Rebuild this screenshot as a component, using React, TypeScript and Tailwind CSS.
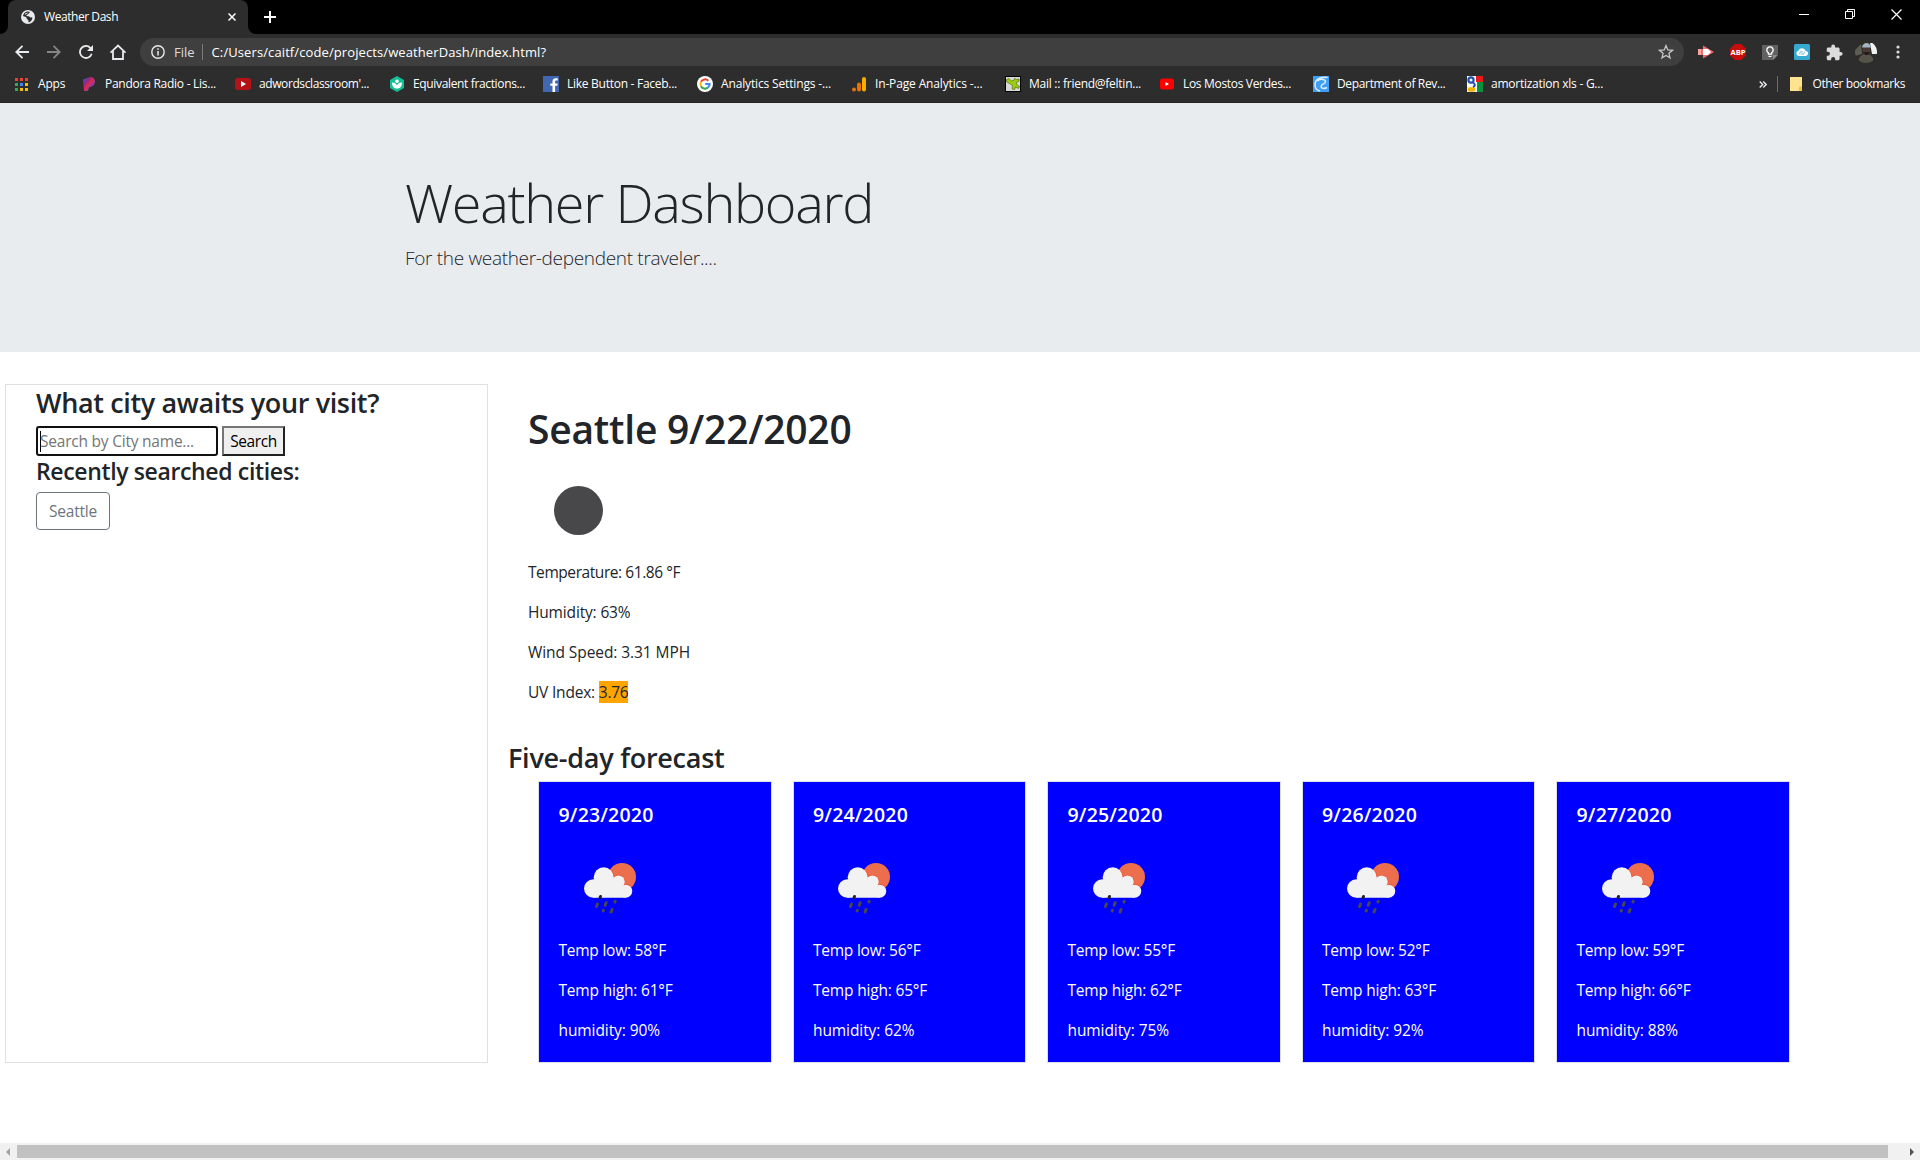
function GlobeIcon() {
  return (
    <svg width="14" height="14" viewBox="0 0 14 14">
      <circle cx="7" cy="7" r="7" fill="#e8eaed" />
      <path d="M6.500 1.500C9 1.300 9.300 2.600 8 3.300c-1 .5-.8 1.200-1.900 1.500-.9.200-.9.900-.2 1.200.8.300 2.300-.1 3 .9.500.7 1.500.6 2.300.4.500 1.200-.4 3.700-2.600 4.800-.9.500-1.400.2-1.200-.6.300-.9-.1-1.500-.9-1.900-.9-.5-.8-1.300-.9-1.800C5.300 6.900 3.500 7 2 6.100c.2-2.200 2-4.200 4.500-4.600z" fill="#2d2d2d" />
      <path d="M4.200 3.200c1.200.3 1.300-.8 2.500-.8.600.4-.2 1-1 1.300-.6.300-.9 1.100-1.900.9z" fill="#e8eaed" />
    </svg>
  );
}

function ExtIcons() {
  return (
    <div className="ml-[6px] flex items-center">
      <span className="flex w-8 justify-center">
        <svg width="16" height="16" viewBox="0 0 16 16">
          <path d="M0 5h5V1.500L16 8 5 14.500V11H0z" fill="#f46a6c" />
          <path d="M0 5h3v6H0z" fill="#f9a3a0" />
          <path d="M5 5h5l3 3-3 3H5z" fill="#fff" />
        </svg>
      </span>
      <span className="flex w-8 justify-center">
        <svg width="16" height="16" viewBox="0 0 16 16">
          <path d="M4.700 0h6.600L16 4.700v6.600L11.300 16H4.700L0 11.300V4.700z" fill="#c70d0c" />
          <text x="8" y="10.800" textAnchor="middle" fontFamily="Open Sans" fontWeight="700" fontSize="7.600" fill="#fff">ABP</text>
        </svg>
      </span>
      <span className="flex w-8 justify-center">
        <svg width="16" height="16" viewBox="0 0 16 16">
          <path d="M0 1h16v9l-5 6H0z" fill="#616161" />
          <path d="M11 16v-5h5z" fill="#8a8a8a" />
          <path d="M6.400 10.200V8.800a3.200 3.200 0 1 1 3.200 0v1.400z" fill="none" stroke="#fff" strokeWidth="1.300" />
          <path d="M6.500 12.400h3" stroke="#fff" strokeWidth="1.200" />
        </svg>
      </span>
      <span className="flex w-8 justify-center">
        <svg width="16" height="16" viewBox="0 0 16 16">
          <rect width="16" height="16" rx="1.500" fill="#35a9cf" />
          <path d="M4.800 12a2.700 2.700 0 0 1-.4-5.300 3.900 3.900 0 0 1 7.300.3 2.500 2.500 0 0 1-.2 5z" fill="#fff" />
          <path d="M6 10.300a1.600 1.600 0 0 1 1.600-2.500h1M10 7.700a1.500 1.500 0 0 1-1.600 2.300H7.200" fill="none" stroke="#35a9cf" strokeWidth=".9" />
        </svg>
      </span>
      <span className="flex w-8 justify-center">
        <svg width="17" height="17" viewBox="1 0.500 22.500 22.500">
          <path d="M20.500 11H19V7c0-1.100-.9-2-2-2h-4V3.500a2.500 2.500 0 0 0-5 0V5H4c-1.100 0-2 .9-2 2v3.800h1.500a2.700 2.700 0 0 1 0 5.400H2V20c0 1.100.9 2 2 2h3.800v-1.500a2.700 2.700 0 0 1 5.400 0V22H17c1.100 0 2-.9 2-2v-4h1.500a2.500 2.500 0 0 0 0-5z" fill="#dcdcdc" />
        </svg>
      </span>
      <span className="flex w-8 justify-center">
        <svg width="22" height="22" viewBox="0 0 22 22">
          <defs>
            <clipPath id="avatar"><circle cx="11" cy="11" r="11" /></clipPath>
          </defs>
          <g clipPath="url(#avatar)">
            <rect width="22" height="22" fill="#2e2c27" />
            <path d="M15 2h7v11h-5z" fill="#eef2f2" />
            <path d="M0 9l6-6 1 10-7 2z" fill="#5d5c55" />
            <path d="M3 22c0-6 4-9 8-9s8 3 8 9z" fill="#56534a" />
            <circle cx="11.500" cy="8.500" r="3.800" fill="#4b3a33" />
            <path d="M7 6.500C7.500.5 15.500.5 16 6.500z" fill="#a3b5c2" />
            <path d="M9 11h5l-1 3h-3z" fill="#1f1b19" />
          </g>
        </svg>
      </span>
      <span className="flex w-8 justify-center">
        <svg width="4" height="14" viewBox="0 0 4 14" fill="#dcdcdc">
          <circle cx="2" cy="2" r="1.600" />
          <circle cx="2" cy="7" r="1.600" />
          <circle cx="2" cy="12" r="1.600" />
        </svg>
      </span>
    </div>
  );
}

const bookmarks = [
  {
    label: "Pandora Radio - Lis...",
    cls: "tracking-[-0.26px]",
    icon: (
      <>
        <defs>
          <linearGradient id="pandora" x1="0" y1="0" x2="1" y2="1">
            <stop offset="0" stopColor="#2b5fd0" />
            <stop offset=".3" stopColor="#8a2a8a" />
            <stop offset=".5" stopColor="#e0284f" />
            <stop offset=".8" stopColor="#5a4ad0" />
            <stop offset="1" stopColor="#3a6bff" />
          </linearGradient>
        </defs>
        <path d="M2 3.500L9 1c3 0 5 2 5 4.500C14 8.500 11.500 11 8.500 11l-1 2.500c-.3 1-.8 1.500-1.700 1.500H3z" fill="url(#pandora)" />
      </>
    ),
  },
  {
    label: "adwordsclassroom'...",
    cls: "tracking-[-0.4px]",
    icon: (
      <>
        <rect x="0" y="2" width="16" height="12" rx="2.500" fill="#b31217" />
        <path d="M6 5l5 3-5 3z" fill="#fff" />
      </>
    ),
  },
  {
    label: "Equivalent fractions...",
    cls: "tracking-[-0.35px]",
    icon: (
      <>
        <path d="M8 0l7 4v8l-7 4-7-4V4z" fill="#14bf96" />
        <circle cx="8" cy="5.200" r="1.800" fill="#fff" />
        <path d="M3 6.500c3 0 4.600 1.500 5 3 .4-1.500 2-3 5-3 0 4-2 6-5 6s-5-2-5-6z" fill="#fff" />
      </>
    ),
  },
  {
    label: "Like Button - Faceb...",
    cls: "tracking-[-0.27px]",
    icon: (
      <>
        <rect width="16" height="16" fill="#4267b2" />
        <path d="M9.500 16V9.800H7.300V7.400h2.200V5.600c0-2.200 1.300-3.300 3.300-3.300h1.900v2.200h-1.300c-1.100 0-1.300.5-1.300 1.300v1.600h2.500l-.3 2.400h-2.200V16z" fill="#fff" />
      </>
    ),
  },
  {
    label: "Analytics Settings -...",
    cls: "tracking-[-0.15px]",
    icon: (
      <>
        <circle cx="8" cy="8" r="8" fill="#fff" />
        <path d="M11.300 4.700A4.600 4.600 0 0 0 4 5.800" fill="none" stroke="#ea4335" strokeWidth="2" />
        <path d="M4 5.800a4.600 4.600 0 0 0 0 4.400" fill="none" stroke="#fbbc05" strokeWidth="2" />
        <path d="M4 10.200a4.600 4.600 0 0 0 7 1.400" fill="none" stroke="#34a853" strokeWidth="2" />
        <path d="M11 11.600A4.600 4.600 0 0 0 12.600 8H8.200" fill="none" stroke="#4285f4" strokeWidth="2" />
      </>
    ),
  },
  {
    label: "In-Page Analytics -...",
    cls: "tracking-[-0.15px]",
    icon: (
      <>
        <circle cx="3" cy="13.500" r="2" fill="#e8710a" />
        <rect x="6" y="6.500" width="4" height="9" rx="2" fill="#e8710a" />
        <rect x="11" y="1" width="4" height="14.500" rx="2" fill="#f9ab00" />
      </>
    ),
  },
  {
    label: "Mail :: friend@feltin...",
    cls: "tracking-[-0.26px]",
    icon: (
      <>
        <rect x=".5" y=".5" width="15" height="15" fill="#d9d9d9" stroke="#000" />
        <path d="M1.500 3.500L4 2.500l2.500 2.500 2.500-.8.500-2 1.800 1.300 2.700-.5v2.200l-2.700 1.300.5 2 2.700 2-.8 2-3.200-1.500-.8 2.500-2.700-.5.500-3.500-3-2L1.500 5.800z" fill="#9acd0f" stroke="#49620b" strokeWidth=".6" />
      </>
    ),
  },
  {
    label: "Los Mostos Verdes...",
    cls: "tracking-[-0.32px]",
    icon: (
      <>
        <rect x="1" y="2.500" width="14" height="11" rx="2.500" fill="#f00" />
        <path d="M6.500 6l3.500 2-3.500 2z" fill="#fff" />
      </>
    ),
  },
  {
    label: "Department of Rev...",
    cls: "tracking-[-0.34px]",
    icon: (
      <>
        <rect width="16" height="16" fill="#3f9ff5" />
        <path d="M14.500 1.500C7 0 1.500 4 2 9.500c.3 3 2.500 5 5 5.500M4.500 5c3-2.500 8-2 8 .8 0 2.200-4.500 2-4.500 4.700 0 2 3.500 2.500 6 1" fill="none" stroke="#dcefff" strokeWidth="1.500" />
      </>
    ),
  },
  {
    label: "amortization xls - G...",
    cls: "tracking-[-0.25px]",
    icon: (
      <>
        <rect width="16" height="16" fill="#fff" />
        <path d="M9 0h7v6H9z" fill="#e8191a" />
        <path d="M10 6h6v10h-6z" fill="#0a8f3c" />
        <path d="M0 11h9v5H0z" fill="#f7e7b0" />
        <ellipse cx="4.500" cy="13.500" rx="3.600" ry="2.200" fill="#f4b400" />
        <circle cx="4" cy="4" r="2.600" fill="none" stroke="#1f4fb5" strokeWidth="2.200" />
        <path d="M6 6.500c3 2 2 3.500 0 4.500" fill="none" stroke="#1f4fb5" strokeWidth="2" />
      </>
    ),
  },
];

const appColors = ["#ea4335", "#ea4335", "#ea4335", "#34a853", "#4285f4", "#fbbc05", "#34a853", "#fbbc05", "#fbbc05"];

function Browser() {
  return (
    <header className="h-[103px] border-b border-[#242424] bg-[#2d2d2d] text-white">
      <div className="flex h-[34px] justify-between bg-black">
        <div className="flex">
          <svg className="mt-[26px]" width="8" height="8" viewBox="0 0 8 8"><path d="M8 0v8H0a8 8 0 0 0 8-8z" fill="#2d2d2d" /></svg>
          <div className="flex h-[34px] w-[240px] items-center rounded-t-lg bg-[#2d2d2d] pr-3 pl-[13px]">
            <GlobeIcon />
            <span className="ml-[9px] text-[12px] tracking-[-0.44px]">Weather Dash</span>
            <svg className="ml-auto" width="8" height="8" viewBox="0 0 8 8">
              <path d="M.5.5l7 7m0-7l-7 7" stroke="#fff" strokeWidth="1.500" />
            </svg>
          </div>
          <svg className="mt-[26px]" width="8" height="8" viewBox="0 0 8 8"><path d="M0 0v8h8a8 8 0 0 1-8-8z" fill="#2d2d2d" /></svg>
          <svg className="mt-[11px] ml-2" width="12" height="12" viewBox="0 0 12 12">
            <path d="M6 0v12M0 6h12" stroke="#fff" strokeWidth="2" />
          </svg>
        </div>
        <div className="flex gap-[35px] pt-[9px] pr-[18px]">
          <svg width="11" height="11" viewBox="0 0 11 11"><path d="M0 5.500h10" stroke="#fff" /></svg>
          <svg width="11" height="11" viewBox="0 0 11 11"><path d="M.5 2.500h7v7h-7zM2.500 2.500v-2h7v7h-2" fill="none" stroke="#fff" /></svg>
          <svg width="11" height="11" viewBox="0 0 11 11"><path d="M.5.5l10 10m0-10l-10 10" stroke="#fff" strokeWidth="1.200" /></svg>
        </div>
      </div>
      <div className="flex h-9 items-center pr-[6px] pl-[6px]">
        <div className="flex w-[134px]">
          <span className="flex w-8 items-center justify-center">
            <svg width="14" height="14" viewBox="0 0 14 14" fill="none" stroke="#e8eaed" strokeWidth="1.800"><path d="M14 7H1.500M7.500.8L1.300 7l6.200 6.200" /></svg>
          </span>
          <span className="flex w-8 items-center justify-center">
            <svg width="14" height="14" viewBox="0 0 14 14" fill="none" stroke="#858585" strokeWidth="1.800"><path d="M0 7h12.500M6.500.8L12.700 7l-6.200 6.200" /></svg>
          </span>
          <span className="flex w-8 items-center justify-center">
            <svg width="14" height="14" viewBox="0 0 14 14"><path d="M12.700 8.800A6 6 0 1 1 11.300 2.800L13 4.500" fill="none" stroke="#e8eaed" strokeWidth="1.800" /><path d="M14 0v6H8z" fill="#e8eaed" /></svg>
          </span>
          <span className="flex w-8 items-center justify-center">
            <svg width="16" height="16" viewBox="0 0 16 16"><path d="M0.500 8.700L8 1.500l7.500 7.200M3 7v8h10V7" fill="none" stroke="#e8eaed" strokeWidth="1.800" /></svg>
          </span>
        </div>
        <div className="flex h-7 flex-1 items-center rounded-full bg-[#3f3f3f] pr-[10px] pl-[11px]">
          <svg width="14" height="14" viewBox="0 0 14 14" fill="none" stroke="#e8eaed"><circle cx="7" cy="7" r="6.200" strokeWidth="1.400" /><path d="M7 6v4.500M7 3.300v1.500" strokeWidth="1.500" /></svg>
          <span className="ml-[9px] text-[13px] text-[#dcdcdc]">File</span>
          <span className="mr-[9px] ml-[7px] h-4 w-px bg-[#7b7b7b]" />
          <span className="text-[13px] tracking-[0.1px]">C:/Users/caitf/code/projects/weatherDash/index.html?</span>
          <svg className="ml-auto" width="16" height="16" viewBox="0 0 16 16"><path d="M8 1.600l1.800 4.300 4.700.4-3.600 3 1.100 4.600L8 11.400l-4 2.500 1.100-4.600-3.600-3 4.700-.4z" fill="none" stroke="#c8c8c8" strokeWidth="1.300" /></svg>
        </div>
        <ExtIcons />
      </div>
      <div className="flex h-[28px] items-center text-[12px]">
        <div className="ml-[15px] grid grid-cols-[repeat(3,3px)] gap-[2px]">
          {appColors.map((c, i) => (
            <span key={i} className="h-[3px] w-[3px]" style={{ backgroundColor: c }} />
          ))}
        </div>
        <span className="ml-[10px] w-[43px] tracking-[-0.2px]">Apps</span>
        {bookmarks.map((b) => (
          <div key={b.label} className="flex w-[154px] items-center gap-2 whitespace-nowrap">
            <svg className="shrink-0" width="16" height="16" viewBox="0 0 16 16">{b.icon}</svg>
            <span className={b.cls}>{b.label}</span>
          </div>
        ))}
        <svg className="ml-auto" width="8" height="7" viewBox="0 0 8 7"><path d="M.7.5l3 3-3 3M4.200.5l3 3-3 3" fill="none" stroke="#e8eaed" strokeWidth="1.400" /></svg>
        <span className="ml-[10px] h-4 w-px bg-[#6b6b6b]" />
        <svg className="ml-3" width="13" height="14" viewBox="0 0 13 14"><path d="M0 0h12v14H0z" fill="#ffe38f" /><path d="M9 9.500h3V14H9z" fill="#f0bd45" /></svg>
        <span className="mr-[15px] ml-[9px] tracking-[-0.4px]">Other bookmarks</span>
      </div>
    </header>
  );
}

function RainIcon() {
  return (
    <svg width="100" height="100" viewBox="0 0 100 100">
      <defs>
        <clipPath id="sun"><circle cx="63" cy="39" r="14" /></clipPath>
      </defs>
      <circle cx="63" cy="39" r="14" fill="#ec6e4c" />
      <g clipPath="url(#sun)" fill="#ea4a2c">
        <circle cx="44.700" cy="39.300" r="10.600" />
        <circle cx="59.500" cy="43.800" r="6.900" />
        <circle cx="66.700" cy="53.200" r="7.100" />
      </g>
      <g fill="#f2f2f2">
        <circle cx="34.300" cy="50.500" r="9.300" />
        <circle cx="44.700" cy="39.300" r="10" />
        <circle cx="59.500" cy="43.800" r="6.300" />
        <circle cx="66.700" cy="53.200" r="6.500" />
        <path d="M34.300 42L50 40l10 3 6.700 8v8.700H34.300z" />
      </g>
      <g stroke="#48484a" strokeLinecap="round" strokeWidth="3">
        <path d="M41.500 58.500l-.4 1" stroke="#222" />
        <path d="M38.500 66l-1 2.500M47.200 64.700l-1 2.600M56.200 63.400l-.3.600M44.400 72.400l-.3.600M53.100 71.500l-1 2.400" />
      </g>
    </svg>
  );
}

const days = [
  { date: "9/23/2020", low: 58, high: 61, humidity: 90 },
  { date: "9/24/2020", low: 56, high: 65, humidity: 62 },
  { date: "9/25/2020", low: 55, high: 62, humidity: 75 },
  { date: "9/26/2020", low: 52, high: 63, humidity: 92 },
  { date: "9/27/2020", low: 59, high: 66, humidity: 88 },
];

export default function App() {
  return (
    <div className="flex h-[1160px] w-[1920px] flex-col overflow-hidden bg-white font-['Open_Sans',sans-serif] text-[15.500px] leading-6 whitespace-nowrap text-[#212529]">
      <Browser />
      <section className="h-[249px] shrink-0 bg-[#e9ecef] pt-16 pl-[405px]">
        <h1 className="mb-[5px] text-[54px] leading-[70px] font-light tracking-[-1.32px]">Weather Dashboard</h1>
        <p className="text-[19px] leading-[32px] font-light tracking-[-0.32px]">For the weather-dependent traveler....</p>
      </section>
      <main className="flex flex-1 items-start pt-8 pl-[5px]">
        <aside className="h-[679px] w-[483px] shrink-0 border border-[#dfdfe4] pl-[30px]">
          <h3 className="mb-[5px] text-[27px] leading-[36px] font-semibold tracking-[-0.36px]">What city awaits your visit?</h3>
          <form className="flex gap-1">
            <div className="flex h-[30px] w-[182px] items-center rounded-[3px] border-2 border-[#101010] pl-[2px] text-[#757575]">
              <span className="h-[21px] w-px bg-black" />
              <span className="-ml-px tracking-[-0.22px]">Search by City name...</span>
            </div>
            <div className="flex h-[30px] w-[63px] items-center justify-center border-2 border-t-[#767676] border-r-[#212121] border-b-[#212121] border-l-[#767676] bg-[#efefef] tracking-[-0.4px] text-black">Search</div>
          </form>
          <h4 className="mb-[5px] text-[23px] leading-[31px] font-semibold tracking-[-0.36px]">Recently searched cities:</h4>
          <div className="flex h-[38px] w-[74px] items-center justify-center rounded border border-[#6c757d] tracking-[-0.2px] text-[#6c757d]">Seattle</div>
        </aside>
        <div className="ml-5">
          <div className="h-[356px] pt-5 pl-5">
            <h1 className="mb-[6px] text-[39px] leading-[50px] font-semibold tracking-[-0.23px]">Seattle 9/22/2020</h1>
            <svg width="100" height="100" viewBox="0 0 100 100"><circle cx="50.500" cy="50.500" r="24.500" fill="#48484a" /></svg>
            <div className="flex flex-col gap-4">
              <p className="tracking-[-0.43px]">Temperature: 61.86 °F</p>
              <p className="tracking-[-0.16px]">Humidity: 63%</p>
              <p className="tracking-[-0.08px]">Wind Speed: 3.31 MPH</p>
              <p className="tracking-[-0.2px]">UV Index: <span className="bg-[#ffa500] tracking-[-0.3px]">3.76</span></p>
            </div>
          </div>
          <h3 className="mb-[5px] text-[27px] leading-[36px] font-semibold tracking-[-0.26px]">Five-day forecast</h3>
          <div className="ml-[30px] flex gap-[21px]">
            {days.map((d) => (
              <article key={d.date} className="h-[282px] w-[233.500px] border border-[#dfdfe4] bg-[#00f] pt-5 pl-[19.500px] text-white">
                <h5 className="mb-[11px] text-[19.500px] leading-[25px] font-semibold tracking-[0.19px]">{d.date}</h5>
                <RainIcon />
                <p className="mb-4 tracking-[-0.24px]">Temp low: {d.low}°F</p>
                <p className="mb-4 tracking-[-0.19px]">Temp high: {d.high}°F</p>
                <p className="tracking-[-0.09px]">humidity: {d.humidity}%</p>
              </article>
            ))}
          </div>
        </div>
      </main>
      <footer className="flex h-[17px] shrink-0 items-center bg-[#f1f1f1]">
        <svg className="w-[17px]" height="8" viewBox="0 0 17 8"><path d="M10 0v8L6 4z" fill="#a3a3a3" /></svg>
        <div className="h-[13px] w-[1871px] bg-[#c1c1c1]" />
        <svg className="ml-auto w-[17px]" height="8" viewBox="0 0 17 8"><path d="M7 0v8l4-4z" fill="#505050" /></svg>
      </footer>
    </div>
  );
}
